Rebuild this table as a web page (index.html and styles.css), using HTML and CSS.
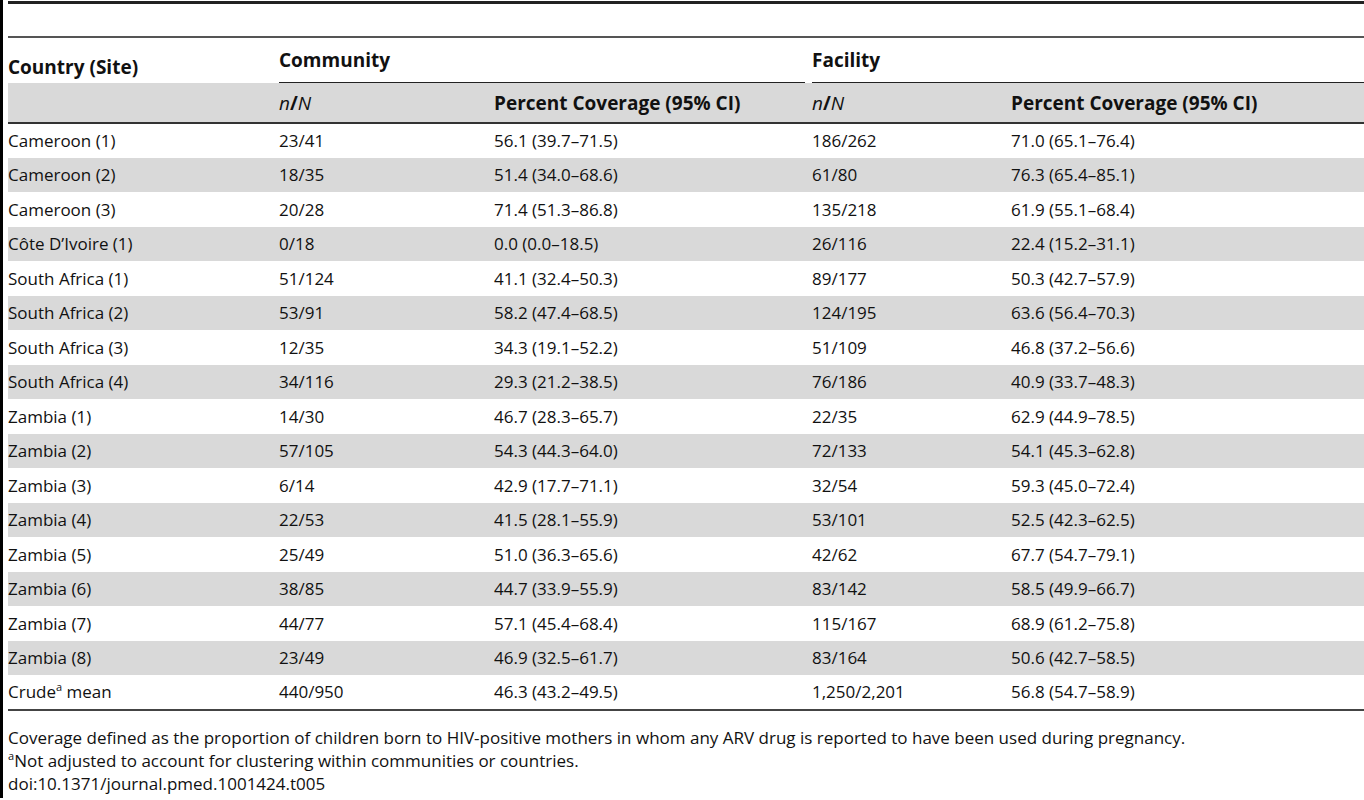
FILE: index.html
```html
<!DOCTYPE html>
<html lang="en">
  <head>
    <meta charset="UTF-8" />
    <meta name="viewport" content="width=device-width, initial-scale=1.0" />
    <title>Table 5 - ARV coverage</title>
    <link rel="stylesheet" href="styles.css">
  </head>
  <body>
    <main class="page">
      <div class="table-top"></div>

      <table class="data-table">
        <thead>
          <tr class="head-main">
            <th class="col-country">Country (Site)</th>
            <th class="group" colspan="2"><div class="group-label first">Community</div></th>
            <th class="group" colspan="2"><div class="group-label">Facility</div></th>
          </tr>
          <tr class="head-sub">
            <th></th>
            <th class="col-n"><i>n</i>/<i>N</i></th>
            <th class="col-pct">Percent Coverage (95% CI)</th>
            <th class="col-n2"><i>n</i>/<i>N</i></th>
            <th>Percent Coverage (95% CI)</th>
          </tr>
        </thead>
        <tbody>
          <tr><td>Cameroon (1)</td><td>23/41</td><td>56.1 (39.7–71.5)</td><td>186/262</td><td>71.0 (65.1–76.4)</td></tr>
          <tr><td>Cameroon (2)</td><td>18/35</td><td>51.4 (34.0–68.6)</td><td>61/80</td><td>76.3 (65.4–85.1)</td></tr>
          <tr><td>Cameroon (3)</td><td>20/28</td><td>71.4 (51.3–86.8)</td><td>135/218</td><td>61.9 (55.1–68.4)</td></tr>
          <tr><td>Côte D’Ivoire (1)</td><td>0/18</td><td>0.0 (0.0–18.5)</td><td>26/116</td><td>22.4 (15.2–31.1)</td></tr>
          <tr><td>South Africa (1)</td><td>51/124</td><td>41.1 (32.4–50.3)</td><td>89/177</td><td>50.3 (42.7–57.9)</td></tr>
          <tr><td>South Africa (2)</td><td>53/91</td><td>58.2 (47.4–68.5)</td><td>124/195</td><td>63.6 (56.4–70.3)</td></tr>
          <tr><td>South Africa (3)</td><td>12/35</td><td>34.3 (19.1–52.2)</td><td>51/109</td><td>46.8 (37.2–56.6)</td></tr>
          <tr><td>South Africa (4)</td><td>34/116</td><td>29.3 (21.2–38.5)</td><td>76/186</td><td>40.9 (33.7–48.3)</td></tr>
          <tr><td>Zambia (1)</td><td>14/30</td><td>46.7 (28.3–65.7)</td><td>22/35</td><td>62.9 (44.9–78.5)</td></tr>
          <tr><td>Zambia (2)</td><td>57/105</td><td>54.3 (44.3–64.0)</td><td>72/133</td><td>54.1 (45.3–62.8)</td></tr>
          <tr><td>Zambia (3)</td><td>6/14</td><td>42.9 (17.7–71.1)</td><td>32/54</td><td>59.3 (45.0–72.4)</td></tr>
          <tr><td>Zambia (4)</td><td>22/53</td><td>41.5 (28.1–55.9)</td><td>53/101</td><td>52.5 (42.3–62.5)</td></tr>
          <tr><td>Zambia (5)</td><td>25/49</td><td>51.0 (36.3–65.6)</td><td>42/62</td><td>67.7 (54.7–79.1)</td></tr>
          <tr><td>Zambia (6)</td><td>38/85</td><td>44.7 (33.9–55.9)</td><td>83/142</td><td>58.5 (49.9–66.7)</td></tr>
          <tr><td>Zambia (7)</td><td>44/77</td><td>57.1 (45.4–68.4)</td><td>115/167</td><td>68.9 (61.2–75.8)</td></tr>
          <tr><td>Zambia (8)</td><td>23/49</td><td>46.9 (32.5–61.7)</td><td>83/164</td><td>50.6 (42.7–58.5)</td></tr>
          <tr><td>Crude<sup>a</sup> mean</td><td>440/950</td><td>46.3 (43.2–49.5)</td><td>1,250/2,201</td><td>56.8 (54.7–58.9)</td></tr>
        </tbody>
      </table>

      <!-- Footnotes -->
      <div class="notes">
        <p>Coverage defined as the proportion of children born to HIV-positive mothers in whom any ARV drug is reported to have been used during pregnancy.</p>
        <p><sup>a</sup>Not adjusted to account for clustering within communities or countries.</p>
        <p>doi:10.1371/journal.pmed.1001424.t005</p>
      </div>
    </main>
  </body>
</html>
```

FILE: styles.css
```css
* {
  margin: 0;
  padding: 0;
  box-sizing: border-box;
}

html,
body {
  width: 100%;
  height: 100%;
  background: #fff;
}

body {
  font-family: "Open Sans", "Noto Sans", sans-serif;
  font-size: 17px;
  color: #111;
}

.page {
  border-left: 3px solid #000;
  padding-left: 5px;
  padding-top: 1px;
  min-height: 798px;
}

.table-top {
  height: 35px;
  border-top: 3px solid #222;
}

.data-table {
  width: 100%;
  border-collapse: collapse;
  border-top: 2px solid #555;
  border-bottom: 2px solid #444;
}

.data-table th,
.data-table td {
  text-align: left;
  white-space: nowrap;
  padding: 0;
}

.data-table th {
  font-weight: 700;
  font-size: 19px;
}

.head-main th {
  height: 46px;
  vertical-align: bottom;
}

.head-main .col-country {
  padding-bottom: 2px;
  line-height: 28px;
}

.group-label {
  border-bottom: 1px solid #222;
  padding-bottom: 10px;
  line-height: 24px;
}

.group-label.first {
  margin-right: 7px;
}

.head-sub th {
  height: 40px;
  background: #d9d9d9;
  border-bottom: 2px solid #333;
}

.head-sub i {
  font-weight: 400;
}

.col-country {
  width: 271px;
}

.col-n {
  width: 215px;
}

.col-pct {
  width: 318px;
}

.col-n2 {
  width: 199px;
}

.data-table tbody td {
  height: 34.5px;
}

.data-table tbody tr:nth-child(even) td {
  background: #d9d9d9;
}

sup {
  font-size: 11px;
  line-height: 0;
}

.notes {
  padding-top: 15px;
  line-height: 23px;
}
```
